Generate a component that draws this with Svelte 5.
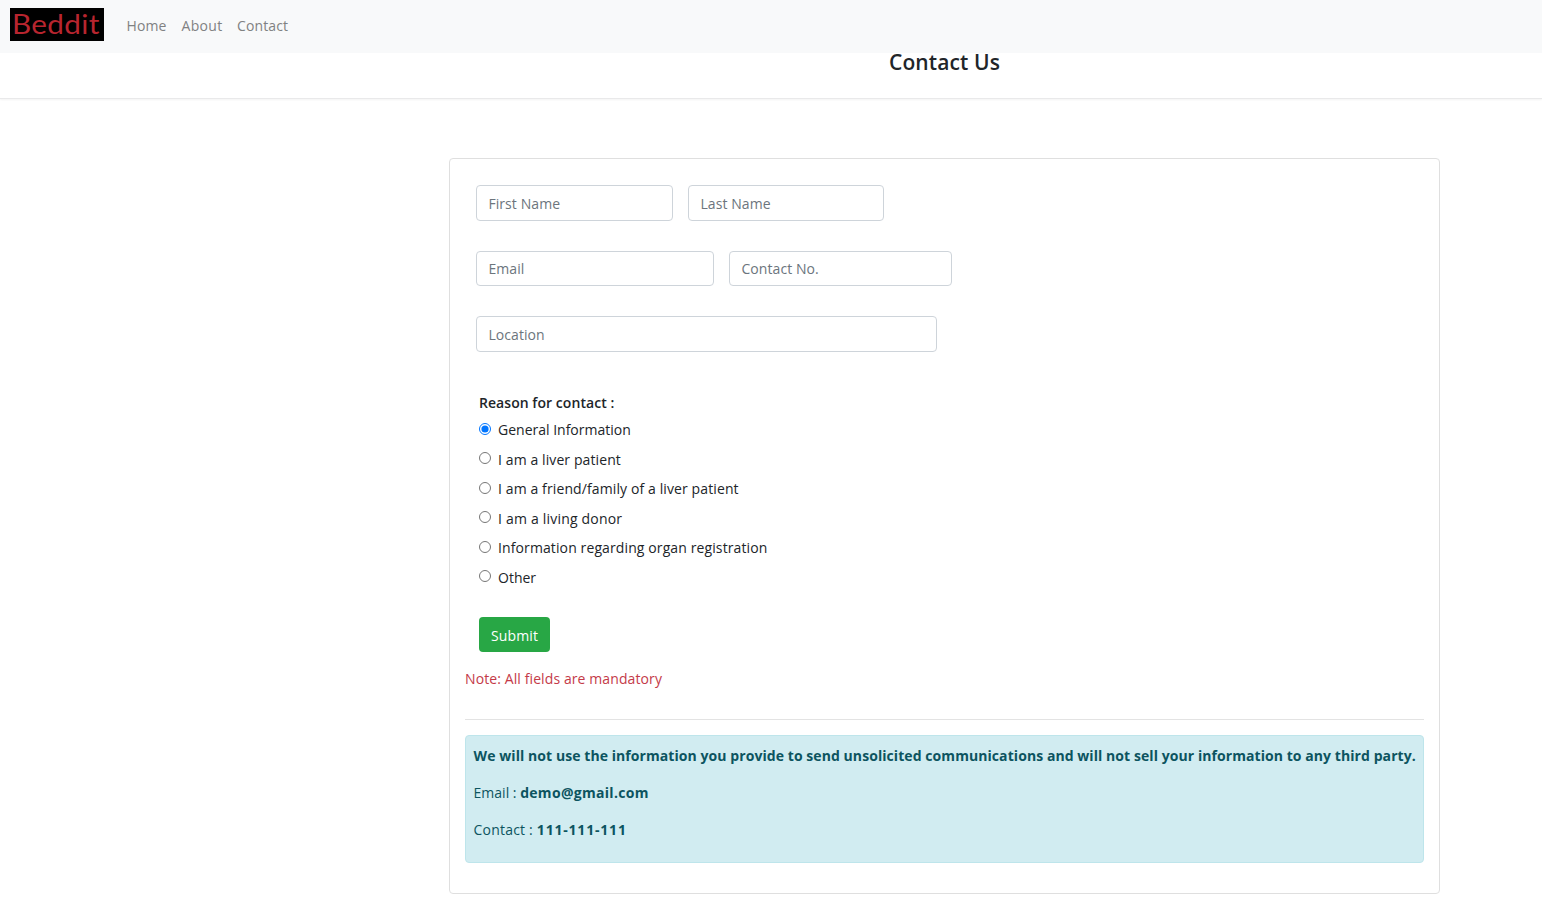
<script>
  const reasons = [
    { label: 'General Information', spacing: 0 },
    { label: 'I am a liver patient', spacing: 0.1 },
    { label: 'I am a friend/family of a liver patient', spacing: 0.11 },
    { label: 'I am a living donor', spacing: 0.2 },
    { label: 'Information regarding organ registration', spacing: 0.11 },
    { label: 'Other', spacing: 0 }
  ];
  let selected = $state('General Information');
</script>

<nav class="navbar">
  <a class="brand" href="#home"><span>Beddit</span></a>
  <a class="link home" href="#home">Home</a>
  <a class="link about" href="#about">About</a>
  <a class="link contact" href="#contact">Contact</a>
</nav>

<header class="title"><h1>Contact Us</h1></header>

<main class="card">
  <form onsubmit={(e) => e.preventDefault()}>
    <div class="row first">
      <input style="width:197px" placeholder="First Name" />
      <input style="width:196px" placeholder="Last Name" />
    </div>
    <div class="row second">
      <input style="width:238px" placeholder="Email" />
      <input style="width:223px" placeholder="Contact No." />
    </div>
    <div class="row third">
      <input style="width:461px" placeholder="Location" />
    </div>

    <fieldset>
      <legend>Reason for contact :</legend>
      {#each reasons as r}
        <label class="reason">
          <input type="radio" name="reason" value={r.label} bind:group={selected} />
          <span style="letter-spacing:{r.spacing}px">{r.label}</span>
        </label>
      {/each}
    </fieldset>
    <button class="submit">Submit</button>
  </form>

  <p class="note">Note: All fields are mandatory</p>
  <hr />
  <section class="alert">
    <p class="promise"><b>We will not use the information you provide to send unsolicited communications and will not sell your information to any third party.</b></p>
    <p>Email : <b class="mail">demo@gmail.com</b></p>
    <p class="phone">Contact : <b>111-111-111</b></p>
  </section>
</main>

<style>
  :global(body) {
    margin: 0;
    background: #fff;
    overflow: hidden;
    font-family: 'Open Sans', 'Noto Sans', sans-serif;
    font-size: 14px;
    line-height: 22px;
    color: #212529;
  }
  .navbar {
    display: flex;
    align-items: flex-start;
    height: 53px;
    box-sizing: border-box;
    padding: 8px 10px;
    background: #f8f9fa;
  }
  .brand {
    width: 94px;
    height: 33px;
    margin-right: 22px;
    background: #000;
    color: #b8252f;
    font: 400 27px/31px Lato, sans-serif;
    text-decoration: none;
    padding-left: 2px;
    box-sizing: border-box;
    white-space: nowrap;
  }
  .brand span {
    display: inline-block;
    letter-spacing: 0.3px;
    transform: scaleX(1.1);
    transform-origin: left center;
  }
  .link {
    color: #808182;
    text-decoration: none;
    line-height: 22px;
    padding-top: 7px;
    white-space: nowrap;
    letter-spacing: 0.13px;
  }
  .home { width: 55px; padding-left: 0.5px; }
  .about { width: 55.5px; letter-spacing: 0.3px; }
  .title {
    height: 46px;
    box-sizing: border-box;
    padding-left: 347px;
    border-bottom: 1px solid #e9e9ea;
    box-shadow: 0 1px 2px rgba(0, 0, 0, 0.05);
    text-align: center;
  }
  h1 {
    margin: 0;
    font-size: 21px;
    line-height: 18px;
    font-weight: 600;
    letter-spacing: 0.1px;
  }
  .card {
    margin: 59px 0 0 449px;
    width: 991px;
    height: 736px;
    box-sizing: border-box;
    border: 1px solid #dfdfdf;
    border-radius: 4px;
    padding: 26px 15px 0;
  }
  .row {
    display: flex;
    gap: 15px;
    padding-left: 11px;
  }
  .row input {
    height: 36px;
    box-sizing: border-box;
    border: 1px solid #ced4da;
    border-radius: 4px;
    padding: 1px 11.4px 0;
    font: inherit;
    letter-spacing: 0.08px;
    color: #495057;
    background: #fff;
  }
  .row input::placeholder { color: #6c757d; opacity: 1; }
  .first { margin-bottom: 30px; }
  .second { margin-bottom: 30px; }
  .row.second input { height: 35px; padding-top: 0; padding-bottom: 1px; }
  fieldset {
    border: 0;
    margin: 40px 0 0;
    padding: 0 0 0 14px;
    min-width: 0;
  }
  legend {
    padding: 0;
    font-weight: 600;
    line-height: 22px;
    margin-bottom: 1px;
    letter-spacing: 0.05px;
  }
  .reason {
    display: flex;
    height: 29.5px;
    align-items: center;
    line-height: 22px;
  }
  .reason span { padding-top: 0.6px; }
  .reason input {
    width: 12px;
    height: 12px;
    margin: -2px 7px 0 0;
    accent-color: #0075ff;
  }
  .submit {
    display: block;
    margin: 25px 0 0 14px;
    width: 71px;
    height: 35px;
    border: 0;
    border-radius: 4px;
    padding: 2px 0 0;
    background: #28a745;
    color: #fff;
    font: inherit;
    letter-spacing: 0.15px;
  }
  .note {
    margin: 16px 0 0;
    color: #c43a48;
    letter-spacing: 0.1px;
  }
  hr {
    margin: 29px 0 15px;
    border: 0;
    border-top: 1px solid #e3e3e3;
  }
  .alert {
    height: 128px;
    box-sizing: border-box;
    border: 1px solid #bee5eb;
    border-radius: 4px;
    background: #d1ecf1;
    color: #0c5460;
    padding: 9px 7.6px;
  }
  .alert p { margin: 0 0 15px; white-space: nowrap; }
  .alert b { font-weight: 700; }
  .promise { letter-spacing: 0.07px; }
  .mail { letter-spacing: 0.3px; }
  .phone { letter-spacing: 0.2px; }
  .phone b { letter-spacing: 0.8px; }
</style>
